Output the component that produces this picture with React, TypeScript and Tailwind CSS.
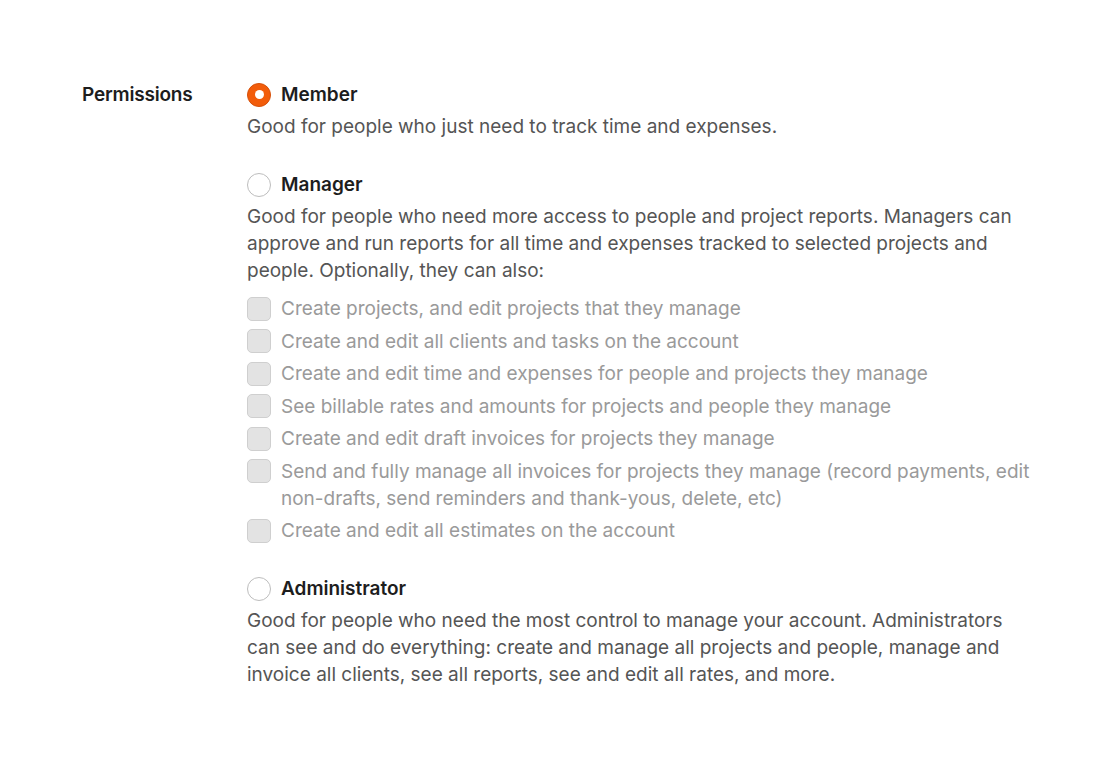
import React from "react";

const items: string[] = [
  "Create projects, and edit projects that they manage",
  "Create and edit all clients and tasks on the account",
  "Create and edit time and expenses for people and projects they manage",
  "See billable rates and amounts for projects and people they manage",
  "Create and edit draft invoices for projects they manage",
  "Send and fully manage all invoices for projects they manage (record payments, edit non-drafts, send reminders and thank-yous, delete, etc)",
  "Create and edit all estimates on the account",
];

function Radio({ checked }: { checked?: boolean }) {
  if (checked) {
    return (
      <span className="w-[24px] h-[24px] rounded-full bg-[#f25c0a] border-[1.5px] border-[#d5500a] flex items-center justify-center shrink-0">
        <span className="w-[9px] h-[9px] rounded-full bg-white" />
      </span>
    );
  }
  return <span className="w-[24px] h-[24px] rounded-full bg-white border border-[#bdbdbd] shrink-0" />;
}

function Option({ checked, title, children }: { checked?: boolean; title: string; children?: React.ReactNode }) {
  return (
    <div className="flex flex-col">
      <div className="flex items-center gap-[10px] h-[27px]">
        <Radio checked={checked} />
        <span className="text-[19px] font-semibold text-[#1d1d1d]">{title}</span>
      </div>
      {children}
    </div>
  );
}

export default function App() {
  return (
    <div
      className="min-h-[768px] bg-white pt-[81px] pl-[82px] text-[19px] leading-[27px]"
      style={{ fontFamily: "Inter, 'Noto Sans', sans-serif" }}
    >
      <div className="flex">
        <div className="w-[165px] shrink-0 h-[27px] flex items-center font-semibold text-[#1d1d1d] tracking-[-0.2px]">Permissions</div>
        <div className="w-[785px] flex flex-col gap-[31px]">
          <Option checked title="Member">
            <p className="mt-[5px] text-[#555555]">Good for people who just need to track time and expenses.</p>
          </Option>
          <Option title="Manager">
            <p className="mt-[5px] text-[#555555]">
              Good for people who need more access to people and project reports. Managers can approve and run reports for all time and expenses tracked to selected projects and people. Optionally, they can also:
            </p>
            <ul className="mt-[11px] flex flex-col gap-[5.5px]">
              {items.map((t) => (
                <li key={t} className="flex gap-[10px] text-[#9a9a9a]">
                  <span className="w-[24px] h-[24px] mt-[1.5px] rounded-[5px] bg-[#e3e3e3] border border-[#cfcfcf] shrink-0" />
                  <span>{t}</span>
                </li>
              ))}
            </ul>
          </Option>
          <Option title="Administrator">
            <p className="mt-[5px] text-[#555555]">
              Good for people who need the most control to manage your account. Administrators can see and do everything: create and manage all projects and people, manage and invoice all clients, see all reports, see and edit all rates, and more.
            </p>
          </Option>
        </div>
      </div>
    </div>
  );
}
